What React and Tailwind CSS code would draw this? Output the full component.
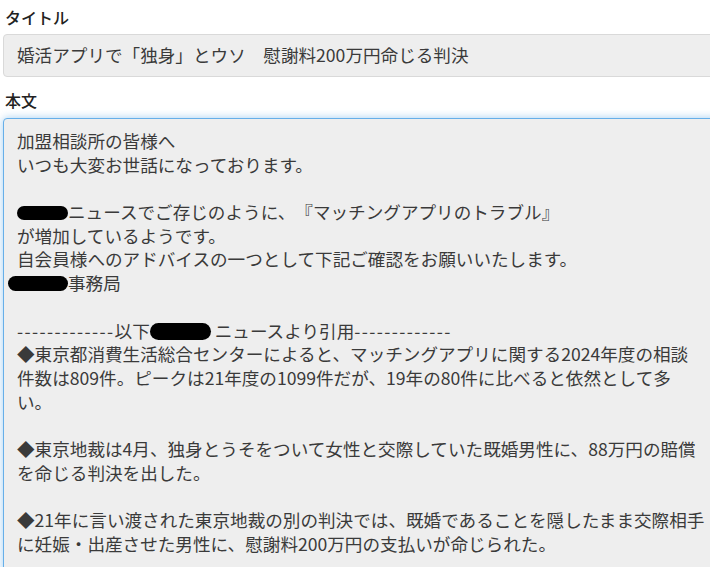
import React from "react";

const font = {
  fontFamily: '"Noto Sans CJK JP", "Noto Sans", sans-serif',
};

function Blot({ className }) {
  return <span className={`inline-block rounded-full bg-black align-middle ${className}`} />;
}

const lines = [
  "加盟相談所の皆様へ",
  "いつも大変お世話になっております。",
  "",
  <>
    <Blot className="h-[14px] w-[51px] -mt-[3px]" />
    ニュースでご存じのように、『マッチングアプリのトラブル』
  </>,
  "が増加しているようです。",
  "自会員様へのアドバイスの一つとして下記ご確認をお願いいたします。",
  <>
    <Blot className="-ml-[9px] h-[15px] w-[60px] -mt-[3px]" />
    事務局
  </>,
  "",
  <>
    <span className="tracking-[1.4px]">-------------</span>以下
    <Blot className="h-[17px] w-[61px] -mt-[3px]" /> ニュースより引用
    <span className="tracking-[1.4px]">-------------</span>
  </>,
  "◆東京都消費生活総合センターによると、マッチングアプリに関する2024年度の相談",
  "件数は809件。ピークは21年度の1099件だが、19年の80件に比べると依然として多",
  "い。",
  "",
  "◆東京地裁は4月、独身とうそをついて女性と交際していた既婚男性に、88万円の賠償",
  "を命じる判決を出した。",
  "",
  "◆21年に言い渡された東京地裁の別の判決では、既婚であることを隠したまま交際相手",
  "に妊娠・出産させた男性に、慰謝料200万円の支払いが命じられた。",
];

export default function App() {
  return (
    <div
      className="h-[567px] w-[710px] overflow-hidden bg-white pl-[3px] pt-[6px] text-[#333] [text-spacing-trim:space-all]"
      style={font}
    >
      <div className="mb-[6px] pl-[2px] text-[16px] font-medium leading-[22px] text-[#222]">タイトル</div>
      <div className="flex h-[43px] w-[760px] items-center rounded-[4px] border border-[#d9d9d9] bg-[#eeeeee] px-[13px] text-[17.6px] text-[#3a3a3a]">
        婚活アプリで「独身」とウソ　慰謝料200万円命じる判決
      </div>

      <div className="mb-[7px] mt-[12px] pl-[2px] text-[16px] font-medium leading-[22px] text-[#222]">本文</div>
      <div className="w-[760px] rounded-[4px] border border-[#66afe9] bg-[#eeeeee] px-[13px] pb-[20px] pt-[10px] text-[17.6px] leading-[23.7px] text-[#3a3a3a] shadow-[0_0_8px_rgba(102,175,233,0.6)]">
        {lines.map((line, i) => (
          <div key={i} className="h-[23.7px] whitespace-nowrap">
            {line}
          </div>
        ))}
      </div>
    </div>
  );
}
